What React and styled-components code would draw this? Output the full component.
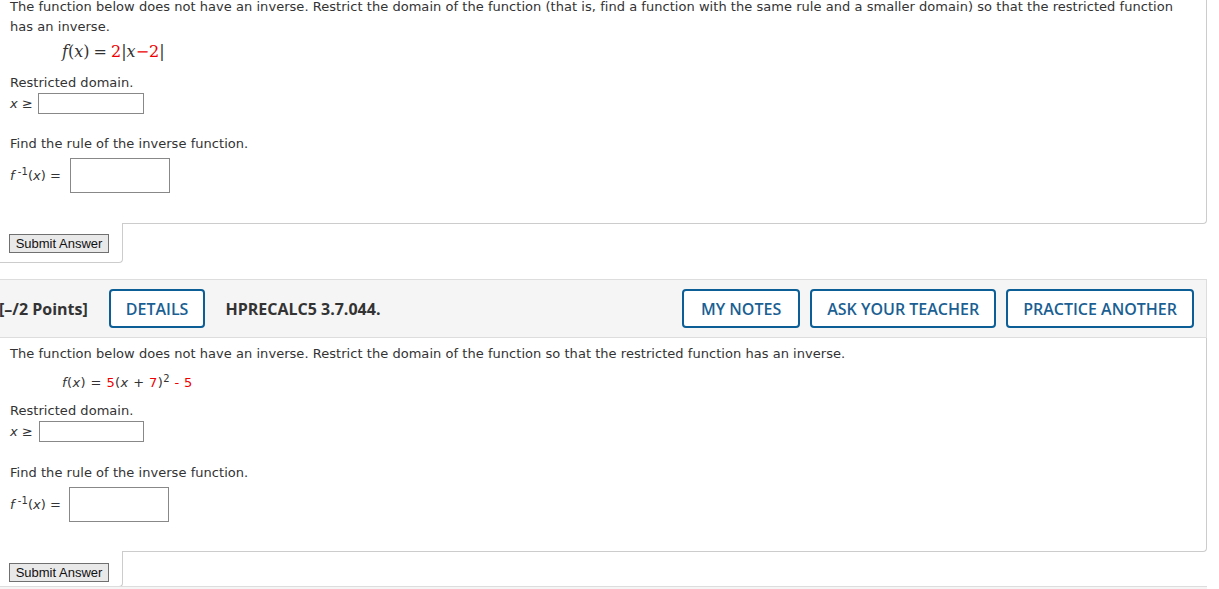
import React from 'react';
import styled, { createGlobalStyle } from 'styled-components';

const GlobalStyle = createGlobalStyle`
  html, body {
    margin: 0;
    padding: 0;
    background: #fff;
    overflow: hidden;
  }
`;

const Page = styled.div`
  width: 1207px;
  margin-top: -3px;
  font-family: 'DejaVu Sans', Verdana, sans-serif;
  font-size: 13px;
  letter-spacing: 0.04px;
  color: #333;
`;

const Body = styled.div`
  border-right: 1px solid #ccc;
  border-bottom: 1px solid #ccc;
  border-bottom-right-radius: 4px;
  padding: ${(p) => p.$top}px 16px ${(p) => p.$bottom}px 10px;
`;

const Para = styled.p`
  margin: 0;
  line-height: 20px;
  margin-top: ${(p) => p.$mt || 0}px;
`;

const MathLine = styled.div`
  margin: ${(p) => p.$mt}px 0 0 52px;
  line-height: 20px;
  height: 20px;
  font-family: ${(p) => (p.$tex ? "'DejaVu Serif', 'Liberation Serif', serif" : 'inherit')};
  font-size: ${(p) => (p.$tex ? '16px' : '13px')};
  letter-spacing: ${(p) => (p.$tex ? '0' : '0.4px')};
  word-spacing: ${(p) => (p.$tex ? '-1px' : '0')};
  color: #333;
`;

const Red = styled.span`
  color: #e00;
`;

const Var = styled.i`
  font-style: italic;
`;

const Sup = styled.sup`
  font-size: 10px;
  line-height: 0;
  vertical-align: 5px;
`;

const AnswerRow = styled.div`
  display: flex;
  align-items: center;
  gap: ${(p) => p.$gap}px;
  margin-top: ${(p) => p.$mt || 0}px;
`;

const AnswerBox = styled.div`
  width: ${(p) => p.$w}px;
  height: ${(p) => p.$h}px;
  border: 1px solid #888;
  background: #fff;
  box-sizing: border-box;
`;

const SubmitTab = styled.div`
  width: 113px;
  margin-top: -1px;
  background: #fff;
  border-right: 1px solid #ccc;
  border-bottom: 1px solid #ccc;
  border-bottom-right-radius: 4px;
  padding: ${(p) => p.$top}px 0 ${(p) => p.$bottom}px 9px;
`;

const SubmitButton = styled.button`
  display: block;
  width: 100px;
  height: 19px;
  padding: 0;
  font-family: 'Liberation Sans', Arial, sans-serif;
  font-size: 13px;
  color: #111;
  background: #e9e9e9;
  border: 1px solid #707070;
  border-radius: 0;
`;

const Header = styled.div`
  display: flex;
  align-items: center;
  height: 57px;
  margin-top: 16px;
  padding-right: 12px;
  background: #f5f5f5;
  border-top: 1px solid #ddd;
  border-bottom: 1px solid #ddd;
  border-right: 1px solid #ddd;
  font-family: 'Open Sans', sans-serif;
  letter-spacing: 0;
  overflow: hidden;
`;

const Points = styled.span`
  margin-left: -1px;
  font-size: 16px;
  font-weight: 700;
  color: #333;
`;

const Code = styled.span`
  margin-left: 20px;
  font-size: 16px;
  font-weight: 700;
  color: #333;
  flex: 1;
`;

const HeaderButton = styled.button`
  height: 39px;
  padding: 0 ${(p) => p.$pad || 15}px;
  margin-left: ${(p) => p.$ml || 0}px;
  font-family: 'Open Sans', sans-serif;
  font-size: 16px;
  font-weight: 600;
  color: #1b5f93;
  background: #fff;
  border: 2px solid #0b5f96;
  border-radius: 4px;
`;

const BottomStrip = styled.div`
  height: 4px;
  margin-top: -1px;
  background: #f5f5f5;
  border-top: 1px solid #ddd;
`;

const InverseLabel = () => (
  <span>
    <Var>f</Var>
    <Sup>&nbsp;-1</Sup>(<Var>x</Var>) =
  </span>
);

const App = () => (
  <Page>
    <GlobalStyle />
    <Body $top={0} $bottom={30}>
      <Para>
        The function below does not have an inverse. Restrict the domain of the function (that is,
        find a function with the same rule and a smaller domain) so that the restricted function
        has an inverse.
      </Para>
      <MathLine $tex $mt={5}>
        <Var>f</Var>(<Var>x</Var>) = <Red>2</Red>|<Var>x</Var>
        <Red>−2</Red>|
      </MathLine>
      <Para $mt={11}>Restricted domain.</Para>
      <AnswerRow $gap={5}>
        <span>
          <Var>x</Var> ≥
        </span>
        <AnswerBox $w={106} $h={21} />
      </AnswerRow>
      <Para $mt={20}>Find the rule of the inverse function.</Para>
      <AnswerRow $gap={9} $mt={4}>
        <InverseLabel />
        <AnswerBox $w={100} $h={35} />
      </AnswerRow>
    </Body>
    <SubmitTab $top={11} $bottom={9}>
      <SubmitButton>Submit Answer</SubmitButton>
    </SubmitTab>

    <Header>
      <Points>[–/2 Points]</Points>
      <HeaderButton $ml={21}>DETAILS</HeaderButton>
      <Code>HPRECALC5 3.7.044.</Code>
      <HeaderButton $pad={17}>MY NOTES</HeaderButton>
      <HeaderButton $ml={10}>ASK YOUR TEACHER</HeaderButton>
      <HeaderButton $ml={10}>PRACTICE ANOTHER</HeaderButton>
    </Header>

    <Body $top={6} $bottom={29}>
      <Para>
        The function below does not have an inverse. Restrict the domain of the function so that
        the restricted function has an inverse.
      </Para>
      <MathLine $mt={9}>
        <Var>f</Var>(<Var>x</Var>) = <Red>5</Red>(<Var>x</Var> + <Red>7</Red>)<Sup>2</Sup>{' '}
        <Red>- 5</Red>
      </MathLine>
      <Para $mt={8}>Restricted domain.</Para>
      <AnswerRow $gap={6}>
        <span>
          <Var>x</Var> ≥
        </span>
        <AnswerBox $w={105} $h={21} />
      </AnswerRow>
      <Para $mt={21}>Find the rule of the inverse function.</Para>
      <AnswerRow $gap={8} $mt={4}>
        <InverseLabel />
        <AnswerBox $w={100} $h={35} />
      </AnswerRow>
    </Body>
    <SubmitTab $top={12} $bottom={4}>
      <SubmitButton>Submit Answer</SubmitButton>
    </SubmitTab>
    <BottomStrip />
  </Page>
);

export default App;
